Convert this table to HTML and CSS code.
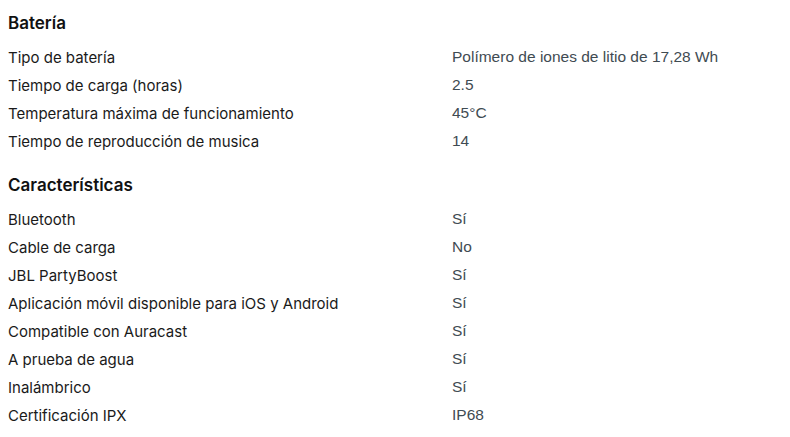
FILE: index.html
```html
<!DOCTYPE html>
<html lang="es">
<head>
<meta charset="utf-8">
<link rel="stylesheet" href="styles.css">
</head>
<body>
<section class="group">
  <h2 class="title">Batería</h2>
  <dl class="specs">
    <div class="row"><dt>Tipo de batería</dt><dd>Polímero de iones de litio de 17,28 Wh</dd></div>
    <div class="row"><dt>Tiempo de carga (horas)</dt><dd>2.5</dd></div>
    <div class="row"><dt>Temperatura máxima de funcionamiento</dt><dd>45°C</dd></div>
    <div class="row"><dt>Tiempo de reproducción de musica</dt><dd>14</dd></div>
  </dl>
</section>
<section class="group">
  <h2 class="title">Características</h2>
  <dl class="specs">
    <div class="row"><dt>Bluetooth</dt><dd>Sí</dd></div>
    <div class="row"><dt>Cable de carga</dt><dd>No</dd></div>
    <div class="row"><dt>JBL PartyBoost</dt><dd>Sí</dd></div>
    <div class="row"><dt>Aplicación móvil disponible para iOS y Android</dt><dd>Sí</dd></div>
    <div class="row"><dt>Compatible con Auracast</dt><dd>Sí</dd></div>
    <div class="row"><dt>A prueba de agua</dt><dd>Sí</dd></div>
    <div class="row"><dt>Inalámbrico</dt><dd>Sí</dd></div>
    <div class="row"><dt>Certificación IPX</dt><dd>IP68</dd></div>
  </dl>
</section>
</body>
</html>
```

FILE: styles.css
```css
body {
  margin: 0;
  padding: 11px 8px 0;
  background: #fff;
  color: #111;
  font-family: Inter, "Noto Sans", sans-serif;
}
.group {
  margin-bottom: 18px;
}
.title {
  margin: 0 0 8px;
  font-size: 17px;
  font-weight: 600;
  line-height: 24px;
  color: #111;
}
.specs {
  margin: 0;
}
.row {
  display: grid;
  grid-template-columns: 444px 1fr;
  height: 28px;
  align-items: center;
}
.row dt {
  font-size: 15px;
  color: #1a1a1a;
}
.row dd {
  margin: 0;
  font-family: "Liberation Sans", Arial, sans-serif;
  font-size: 15.5px;
  color: #3f4b52;
}
```
